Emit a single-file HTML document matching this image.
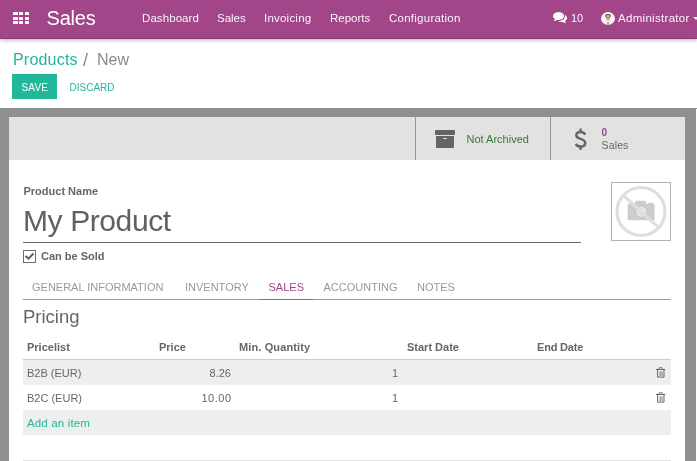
<!DOCTYPE html>
<html><head><meta charset="utf-8">
<style>
*{margin:0;padding:0;box-sizing:border-box}
html,body{width:697px;height:461px;overflow:hidden;background:#fff;font-family:"Liberation Sans",sans-serif;color:#666}
#w{position:absolute;left:0;top:0;width:697px;height:461px;background:#fff;will-change:transform;overflow:hidden}
.a{position:absolute;white-space:nowrap;line-height:1}
.b{position:absolute}
#nav{position:absolute;left:0;top:0;width:697px;height:39px;background:#a24689;border-bottom:1px solid #8a3a74;box-shadow:0 1px 4px rgba(0,0,0,0.32)}
.nt{color:#faf5f9;font-size:11.5px}
.grid i{position:absolute;width:4.5px;height:3px;background:#fff;border-radius:0.6px}
.th{font-size:11px;font-weight:bold;color:#666}
.td{font-size:11px;color:#666}
.tab{font-size:11px;color:#999}
</style></head><body><div id="w">
<div id="nav">
  <div class="grid" style="position:absolute;left:13px;top:12px;width:16px;height:12px">
    <i style="left:0;top:0"></i><i style="left:5.75px;top:0"></i><i style="left:11.5px;top:0"></i>
    <i style="left:0;top:4.5px"></i><i style="left:5.75px;top:4.5px"></i><i style="left:11.5px;top:4.5px"></i>
    <i style="left:0;top:9px"></i><i style="left:5.75px;top:9px"></i><i style="left:11.5px;top:9px"></i>
  </div>
  <div class="a" style="left:46.5px;top:7.7px;font-size:20px;letter-spacing:-0.2px;color:#fff">Sales</div>
  <div class="a nt" style="left:142px;top:13px;letter-spacing:0.08px">Dashboard</div>
  <div class="a nt" style="left:217px;top:13px">Sales</div>
  <div class="a nt" style="left:264px;top:13px;letter-spacing:0.22px">Invoicing</div>
  <div class="a nt" style="left:330px;top:13px">Reports</div>
  <div class="a nt" style="left:389px;top:13px;letter-spacing:0.25px">Configuration</div>
  <svg style="position:absolute;left:553px;top:10px" width="14" height="14" viewBox="0 0 1792 1792">
    <path fill="#fff" d="M1408 768q0 139-94 257t-256.5 186.5-353.5 68.5q-86 0-176-16-124 88-278 128-36 9-86 16h-3q-11 0-20.5-8t-11.5-21q-1-3-1-6.5t.5-6.5 2-6l2.5-5 3.5-5.5 4-5 4.5-5 4-4.5q5-6 23-25t26-29.5 22.5-29 25-38.5 20.5-44q-124-72-195-177t-71-224q0-139 94-257t256.5-186.5 353.5-68.5 353.5 68.5 256.5 186.5 94 257zm384 256q0 120-71 224.5t-195 176.5q10 24 20.5 44t25 38.5 22.5 29 26 29.5 23 25q1 1 4 4.5t4.5 5 4 5 3.5 5.5l2.5 5 2 6 .5 6.5-1 6.5q-3 14-13 22t-22 7q-50-7-86-16-154-40-278-128-90 16-176 16-271 0-472-132 58 4 88 4 161 0 309-45t264-129q125-92 192-212t67-254q0-77-23-152 129 71 204 178t75 230z"/>
  </svg>
  <div class="a nt" style="left:571px;top:12.5px;font-size:11px">10</div>
  <div class="b" style="left:601px;top:12px;width:14px;height:13px;border-radius:50%;background:#f7f5f5;overflow:hidden">
    <div class="b" style="left:4.4px;top:1.6px;width:5.4px;height:3.2px;border-radius:3px 3px 1px 1px;background:#745444"></div>
    <div class="b" style="left:4.8px;top:3.4px;width:4.6px;height:6px;border-radius:40% 40% 50% 50%;background:#d9b2a2"></div>
    <div class="b" style="left:5.2px;top:4.6px;width:3.8px;height:0.8px;background:#9c7a6e"></div>
    <div class="b" style="left:5.8px;top:10.4px;width:2.6px;height:2.8px;background:#a3a3a3"></div>
  </div>
  <div class="a nt" style="left:618px;top:12.5px;font-size:11.5px;letter-spacing:0.3px">Administrator</div>
  <div class="b" style="left:693px;top:17px;width:0;height:0;border-left:3px solid transparent;border-right:3px solid transparent;border-top:3px solid #f6eef4"></div>
</div>

<div class="a" style="left:13px;top:52px;font-size:16px;letter-spacing:0.2px;color:#21b799">Products</div>
<div class="a" style="left:83px;top:51px;font-size:18px;color:#8a8a8a">/</div>
<div class="a" style="left:97px;top:52px;font-size:16px;color:#8a8a8a">New</div>
<div class="b" style="left:12px;top:74px;width:45px;height:25px;background:#21b799"></div>
<div class="a" style="left:21.5px;top:82.5px;font-size:10px;letter-spacing:0.2px;color:#fff">SAVE</div>
<div class="a" style="left:69.5px;top:82.5px;font-size:10px;color:#21b799">DISCARD</div>

<div class="b" style="left:0;top:108px;width:697px;height:353px;background:#8f8f8f"></div>
<div class="b" style="left:9px;top:117px;width:676px;height:344px;background:#fff"></div>
<div class="b" style="left:9px;top:117px;width:676px;height:43px;background:#e2e2e0"></div>
<div class="b" style="left:415px;top:117px;width:1px;height:43px;background:#969696"></div>
<div class="b" style="left:550px;top:117px;width:1px;height:43px;background:#969696"></div>
<!-- archive icon -->
<div class="b" style="left:435px;top:130px;width:20px;height:4.5px;background:#646464;border-radius:1px"></div>
<div class="b" style="left:436px;top:136px;width:18px;height:12.2px;background:#646464;border-radius:0 0 1px 1px"></div>
<div class="b" style="left:442.8px;top:137.8px;width:4.5px;height:1.3px;background:#e2e2e0;border-radius:0.5px"></div>
<div class="a" style="left:466.5px;top:134px;font-size:11px;color:#3c763d">Not Archived</div>
<svg class="b" style="left:570px;top:125px" width="22" height="28" viewBox="0 0 22 28">
  <rect x="9.4" y="3.6" width="2.4" height="4" fill="#666"/>
  <rect x="9.4" y="21" width="2.4" height="3.9" fill="#666"/>
  <path d="M15.3 9.6C14.2 7.8 12.5 6.9 10.6 6.9 8.1 6.9 6.3 8.3 6.3 10.3 6.3 12.6 8.4 13.3 10.6 13.9 13 14.6 15.2 15.5 15.2 18 15.2 20.2 13.3 21.6 10.6 21.6 8.6 21.6 6.9 20.7 5.8 19" fill="none" stroke="#666" stroke-width="2.5"/>
</svg>
<div class="a" style="left:601.5px;top:128px;font-size:10px;color:#a24689;font-weight:bold">0</div>
<div class="a" style="left:601.5px;top:140px;font-size:10.5px;letter-spacing:0.15px;color:#666">Sales</div>

<div class="a" style="left:23.5px;top:186px;font-size:11px;font-weight:bold;color:#666">Product Name</div>
<div class="a" style="left:23px;top:205.5px;font-size:30px;letter-spacing:-0.4px;color:#606060">My Product</div>
<div class="b" style="left:23px;top:242px;width:558px;height:1px;background:#666"></div>
<!-- image placeholder -->
<div class="b" style="left:611px;top:182px;width:60px;height:59px;border:1px solid #b3b3b3;background:#fff"></div>
<svg class="b" style="left:611px;top:182px" width="60" height="59" viewBox="0 0 60 59">
  <circle cx="30" cy="29.5" r="24" fill="none" stroke="#dedede" stroke-width="3.2"/>
  <path d="M18.3 21.8h5.2l1.4-3h9.4l1.4 3h1.9v-1h4.2v1h.5c.8 0 1.3.5 1.3 1.3v13.9c0 .8-.5 1.3-1.3 1.3h-24.3c-.8 0-1.3-.5-1.3-1.3v-13.9c0-.8.5-1.3 1.3-1.3z" fill="#cdcdcd"/>
  <circle cx="30.4" cy="29.6" r="6.6" fill="#c4c4c4"/>
  <circle cx="30.4" cy="29.6" r="5.4" fill="#e4e4e4"/>
  <line x1="13.4" y1="14.4" x2="47.3" y2="45.4" stroke="#dedede" stroke-width="3.2"/>
</svg>
<!-- checkbox -->
<div class="b" style="left:23px;top:250px;width:13px;height:13px;border:1px solid #6e6e6e;background:#fff"></div>
<svg class="b" style="left:23px;top:250px" width="13" height="13" viewBox="0 0 13 13"><path d="M2.5 5.9l3 2.8 4.9-5.2" stroke="#5e5e5e" stroke-width="2" fill="none"/></svg>
<div class="a" style="left:41px;top:251px;font-size:11px;font-weight:bold;color:#666">Can be Sold</div>

<!-- tabs -->
<div class="a tab" style="left:32px;top:282px">GENERAL INFORMATION</div>
<div class="a tab" style="left:185px;top:282px">INVENTORY</div>
<div class="a tab" style="left:268.5px;top:282px;color:#a24689">SALES</div>
<div class="a tab" style="left:323.5px;top:282px">ACCOUNTING</div>
<div class="a tab" style="left:417px;top:282px">NOTES</div>
<div class="b" style="left:23px;top:299px;width:648px;height:1px;background:#999"></div>
<div class="b" style="left:259px;top:299px;width:54px;height:1px;background:#a9509a"></div>

<div class="a" style="left:23px;top:308px;font-size:18.5px;color:#666">Pricing</div>

<!-- table -->
<div class="b" style="left:23px;top:359px;width:648px;height:1px;background:#cdcdcd"></div>
<div class="b" style="left:23px;top:360px;width:648px;height:25px;background:#edeeee"></div>
<div class="b" style="left:23px;top:410px;width:648px;height:25px;background:#edeeee"></div>
<div class="a th" style="left:27px;top:342px">Pricelist</div>
<div class="a th" style="left:159px;top:342px">Price</div>
<div class="a th" style="left:239px;top:342px;letter-spacing:0.12px">Min. Quantity</div>
<div class="a th" style="left:407px;top:342px">Start Date</div>
<div class="a th" style="left:537px;top:342px;letter-spacing:-0.2px">End Date</div>

<div class="a td" style="left:27px;top:368px">B2B (EUR)</div>
<div class="a td" style="right:466px;top:368px">8.26</div>
<div class="a td" style="right:299px;top:368px">1</div>
<div class="a td" style="left:27px;top:393px">B2C (EUR)</div>
<div class="a td" style="right:465.5px;top:393px;letter-spacing:0.5px">10.00</div>
<div class="a td" style="right:299px;top:393px">1</div>
<div class="a" style="left:27px;top:418px;font-size:11.5px;letter-spacing:0.15px;color:#21b799">Add an item</div>
<svg class="b" style="left:650px;top:362px" width="22" height="20" viewBox="0 0 22 20"><path d="M6 6.9h9.2v1.1h-9.2z" fill="#666"/><path d="M8.9 7.2l.5-1.6h2.6l.5 1.6" fill="none" stroke="#777" stroke-width="0.9"/><path d="M7.6 8v7.1h6.4v-7.1" fill="none" stroke="#666" stroke-width="1"/><path d="M10.1 9.3v4.8M12 9.3v4.8" stroke="#666" stroke-width="0.9"/></svg>
<svg class="b" style="left:650px;top:387px" width="22" height="20" viewBox="0 0 22 20"><path d="M6 6.9h9.2v1.1h-9.2z" fill="#666"/><path d="M8.9 7.2l.5-1.6h2.6l.5 1.6" fill="none" stroke="#777" stroke-width="0.9"/><path d="M7.6 8v7.1h6.4v-7.1" fill="none" stroke="#666" stroke-width="1"/><path d="M10.1 9.3v4.8M12 9.3v4.8" stroke="#666" stroke-width="0.9"/></svg>

<div class="b" style="left:23px;top:460px;width:648px;height:1px;background:#e3e3e3"></div>
<div class="b" style="left:696px;top:109px;width:1px;height:352px;background:#fff"></div>
</div></body></html>
